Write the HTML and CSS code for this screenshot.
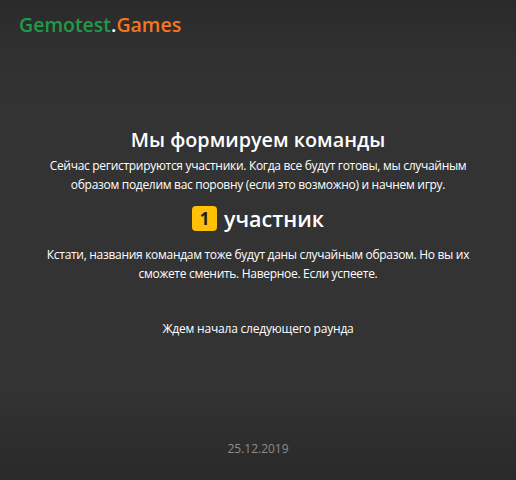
FILE: index.html
```html
<!DOCTYPE html>
<html lang="ru">
<head>
<meta charset="utf-8">
<link rel="stylesheet" href="styles.css">
</head>
<body>
<div class="page">
  <header class="header">
    <div class="logo"><span class="logo-a">Gemotest</span><span class="logo-dot">.</span><span class="logo-b">Games</span></div>
  </header>
  <main class="main">
    <h1 class="title">Мы формируем команды</h1>
    <p class="text">Сейчас регистрируются участники. Когда все будут готовы, мы случайным образом поделим вас поровну (если это возможно) и начнем игру.</p>
    <div class="count"><span class="badge">1</span><span class="count-label">участник</span></div>
    <p class="text text-second">Кстати, названия командам тоже будут даны случайным образом. Но вы их сможете сменить. Наверное. Если успеете.</p>
    <p class="wait">Ждем начала следующего раунда</p>
  </main>
  <footer class="footer">25.12.2019</footer>
</div>
</body>
</html>
```
FILE: styles.css
```css
html, body {
  margin: 0;
  height: 100%;
}
body {
  background: linear-gradient(to bottom, #2a2a2a 0px, #303030 50px, #333333 110px, #333333 390px, #2f2f2f 425px, #2a2a2a 480px);
  color: #fff;
  font-family: "Open Sans", "Noto Sans", sans-serif;
}
.page {
  height: 480px;
  display: flex;
  flex-direction: column;
}
.header {
  padding: 12px 19px 0;
  height: 40px;
  box-sizing: border-box;
}
.logo {
  font-size: 19.5px;
  font-weight: 600;
  line-height: 26px;
}
.logo-a { color: #1e9b48; }
.logo-dot { color: #fff; }
.logo-b { color: #f5761f; }
.main {
  flex: 1;
  display: flex;
  flex-direction: column;
  align-items: center;
  text-align: center;
  padding: 87px 30px 0;
}
.title {
  margin: 0;
  font-size: 19.8px;
  font-weight: 600;
  line-height: 26px;
}
.text {
  margin: 3px 0 0;
  font-size: 12px;
  letter-spacing: -0.3px;
  line-height: 19px;
  max-width: 430px;
}
.count {
  display: flex;
  align-items: center;
  gap: 7px;
  margin-top: 12px;
  height: 25px;
}
.badge {
  width: 25px;
  height: 25px;
  background: #ffc107;
  border-radius: 4px;
  color: #1e1e1e;
  font-size: 17px;
  font-weight: 700;
  display: flex;
  align-items: center;
  justify-content: center;
}
.count-label {
  font-size: 21.5px;
  font-weight: 600;
  line-height: 25px;
}
.text-second {
  margin-top: 14px;
}
.wait {
  margin: 36px 0 0;
  font-size: 12px;
  letter-spacing: -0.2px;
  line-height: 19px;
}
.footer {
  text-align: center;
  color: #8c8c8c;
  font-size: 12px;
  line-height: 20px;
  padding-bottom: 21px;
}
```
